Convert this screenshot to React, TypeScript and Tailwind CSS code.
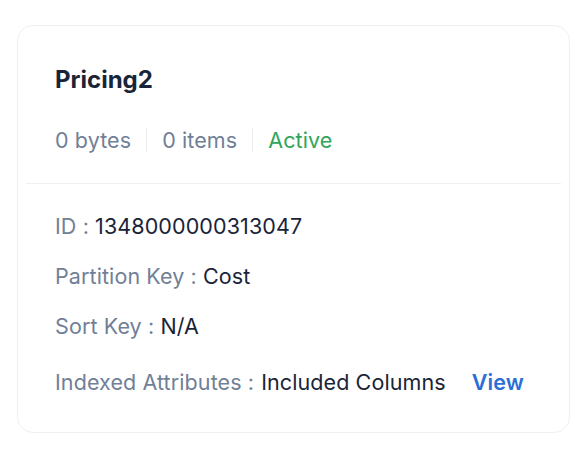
import React from "react";

const rows = [
  { label: "ID", value: "1348000000313047" },
  { label: "Partition Key", value: "Cost" },
  { label: "Sort Key", value: "N/A" },
];

export default function App() {
  return (
    <div className="min-h-screen bg-white pl-[17px] pr-[18px] pt-[25px] font-['Inter',sans-serif]">
      <div className="h-[408px] rounded-2xl border border-[#edf0f4] bg-white">
        <div className="px-[37px] pt-[40px] pb-[31px]">
          <h2 className="text-[24px] font-bold leading-7 text-[#1a2438]">Pricing2</h2>
          <div className="mt-[34px] flex items-center text-[21.5px] leading-6 tracking-[0.1px] text-[#718096]">
            <span>0 bytes</span>
            <span className="mx-[15px] h-[24px] w-px bg-[#e8ebf0]" />
            <span>0 items</span>
            <span className="mx-[15px] h-[24px] w-px bg-[#e8ebf0]" />
            <span className="text-[#2fa55a]">Active</span>
          </div>
        </div>
        <div className="mx-2 h-px bg-[#edf0f4]" />
        <div className="flex flex-col gap-[26px] px-[37px] pt-[30px] text-[21.5px] leading-6 tracking-[0.1px]">
          {rows.map((r) => (
            <div key={r.label}>
              <span className="text-[#718096]">{r.label} : </span>
              <span className="text-[#1a2438]">{r.value}</span>
            </div>
          ))}
          <div className="mt-[6px] flex items-center">
            <span className="text-[#718096]">Indexed Attributes :</span>
            <span className="ml-[7px] text-[#1a2438]">Included Columns</span>
            <span className="ml-[26px] font-semibold text-[#2b6fd6]">View</span>
          </div>
        </div>
      </div>
    </div>
  );
}
